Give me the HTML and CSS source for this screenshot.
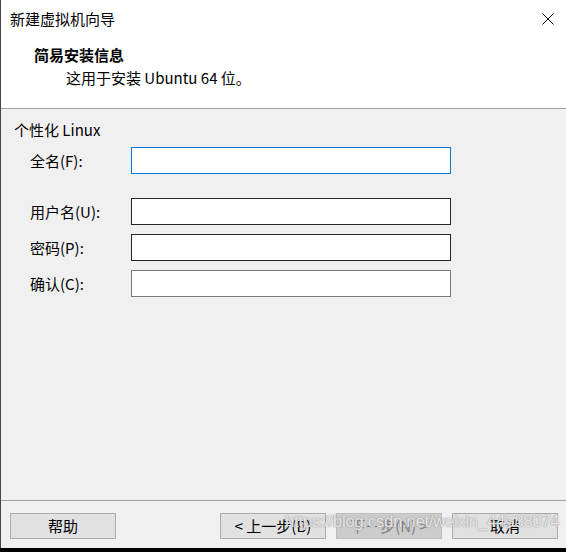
FILE: index.html
```html
<!DOCTYPE html>
<html lang="zh-CN">
<head>
    <meta charset="UTF-8">
    <title>新建虚拟机向导</title>
    <link rel="stylesheet" href="styles.css">
</head>
<body>
    <div class="wizard">
        <div class="wizard-top">
            <div class="titlebar">
                <span class="title">新建虚拟机向导</span>
                <button class="close" aria-label="关闭">
                    <svg width="12" height="12" viewBox="0 0 12 12">
                        <path d="M0.5 0.5 L11.5 11.5 M11.5 0.5 L0.5 11.5" stroke="#000" stroke-width="1" fill="none"/>
                    </svg>
                </button>
            </div>
            <div class="page-head">
                <h1>简易安装信息</h1>
                <p>这用于安装 Ubuntu 64 位。</p>
            </div>
        </div>

        <div class="wizard-body">
            <div class="group-title">个性化 Linux</div>
            <div class="form">
                <label for="fullName">全名(F):</label>
                <input type="text" id="fullName" class="focused">

                <label for="userName" class="spaced">用户名(U):</label>
                <input type="text" id="userName" class="spaced">

                <label for="password">密码(P):</label>
                <input type="password" id="password">

                <label for="confirm">确认(C):</label>
                <input type="password" id="confirm" class="soft">
            </div>
        </div>

        <div class="wizard-foot">
            <button class="btn">帮助</button>
            <div class="nav">
                <button class="btn">&lt; 上一步(B)</button>
                <button class="btn" disabled>下一步(N) &gt;</button>
                <button class="btn">取消</button>
            </div>
            <span class="watermark">https://blog.csdn.net/weixin_44538074</span>
        </div>
    </div>
</body>
</html>
```

FILE: styles.css
```css
body {
    margin: 0;
    background-color: #000;
    font-family: "Noto Sans CJK SC", "Noto Sans", sans-serif;
    font-size: 15px;
    color: #000;
}

.wizard {
    height: 548px;
    border-left: 1px solid #474747;
    background-color: #f0f0f0;
    display: flex;
    flex-direction: column;
}

/* white title + page heading */
.wizard-top {
    background-color: #fff;
    height: 108px;
    border-bottom: 1px solid #a0a0a0;
}

.titlebar {
    height: 38px;
    display: flex;
    align-items: center;
    justify-content: space-between;
    padding-left: 9px;
}
.title {
    line-height: 20px;
}
.close {
    width: 24px;
    height: 38px;
    border: none;
    background: none;
    padding: 0;
    display: flex;
    align-items: center;
    justify-content: center;
    margin-right: 6px;
}

.page-head {
    padding-left: 33px;
    padding-top: 7px;
}
.page-head h1 {
    margin: 0;
    font-size: 15px;
    font-weight: bold;
    line-height: 20px;
}
.page-head p {
    margin: 3px 0 0 32px;
    line-height: 20px;
}

/* form area */
.wizard-body {
    flex: 1;
    padding: 11px 0 0 13px;
}
.group-title {
    line-height: 20px;
}
.form {
    display: grid;
    grid-template-columns: 101px 320px;
    row-gap: 9px;
    align-items: center;
    padding-left: 16px;
    margin-top: 7px;
}
.form label {
    line-height: 20px;
}
.form input {
    box-sizing: border-box;
    height: 27px;
    margin: 0;
    border: 1px solid #262626;
    background-color: #fff;
    font: inherit;
    padding: 0 4px;
    outline: none;
}
.form .spaced {
    margin-top: 15px;
}
.form input.focused {
    border-color: #0078d7;
}
.form input.soft {
    border-color: #7a7a7a;
}

/* button row */
.wizard-foot {
    position: relative;
    box-sizing: border-box;
    height: 48px;
    flex-shrink: 0;
    border-top: 1px solid #a0a0a0;
    display: flex;
    align-items: flex-start;
    justify-content: space-between;
    padding: 12px 8px 0 9px;
}
.nav {
    display: flex;
    gap: 10px;
}
.btn {
    box-sizing: border-box;
    width: 106px;
    height: 26px;
    border: 1px solid #adadad;
    background-color: #e1e1e1;
    font: inherit;
    color: #000;
    padding: 0;
    line-height: 22px;
}
.btn:disabled {
    background-color: #cccccc;
    border-color: #bfbfbf;
    color: #838383;
}

/* blog address stamped over the button row */
.watermark {
    position: absolute;
    left: 284px;
    top: 11px;
    font-family: "Liberation Sans", Arial, sans-serif;
    font-size: 17px;
    letter-spacing: -0.4px;
    color: rgba(255, 255, 255, 0.8);
    text-shadow: 0 0 1px rgba(110, 110, 110, 0.8), 0 0 2px rgba(150, 150, 150, 0.5);
    pointer-events: none;
    white-space: nowrap;
}
```
